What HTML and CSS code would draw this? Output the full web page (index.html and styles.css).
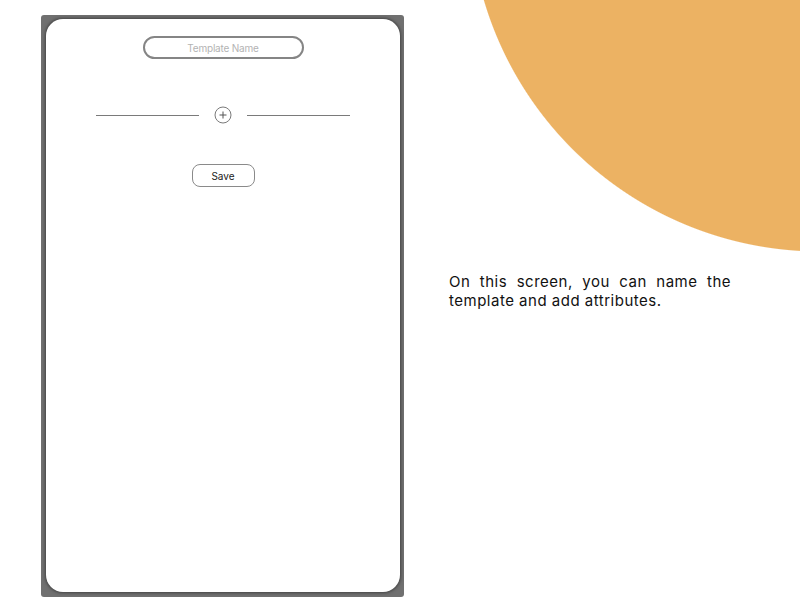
FILE: index.html
```html
<!DOCTYPE html>
<html>
<head>
<meta charset="utf-8">
<link rel="stylesheet" href="styles.css">
</head>
<body>
<div class="page">
  <div class="device">
    <div class="card">
      <div class="name-input">Template Name</div>
      <div class="add-row">
        <span class="rule"></span>
        <svg class="plus" width="18" height="18" viewBox="0 0 18 18">
          <circle cx="9" cy="9" r="8" fill="none" stroke="#7a7a7a" stroke-width="1"/>
          <path d="M9 5.5v7M5.5 9h7" stroke="#555" stroke-width="1" fill="none"/>
        </svg>
        <span class="rule"></span>
      </div>
      <div class="save-btn">Save</div>
    </div>
  </div>
  <p class="caption">On this screen, you can name the template and add attributes.</p>
</div>
</body>
</html>
```
FILE: styles.css
```css
html, body {
  margin: 0;
  padding: 0;
  background: #ffffff;
}
body {
  font-family: Inter, "Noto Sans", sans-serif;
}
.page {
  width: 800px;
  height: 600px;
  box-sizing: border-box;
  display: flex;
  align-items: flex-start;
  padding: 15px 0 0 41px;
  background: radial-gradient(circle 351px at 820px -99px, #ecb263 99.7%, rgba(236, 178, 99, 0) 100%);
}
.device {
  width: 363px;
  height: 582px;
  box-sizing: border-box;
  padding: 4px 4px 5px 5px;
  background: #707070;
  border-radius: 3px;
  display: flex;
}
.card {
  flex: 1;
  background: #ffffff;
  border-radius: 17px;
  box-shadow: 0 0 3px 1px #444444;
  display: flex;
  flex-direction: column;
  align-items: center;
  padding-top: 17px;
}
.name-input {
  width: 161px;
  height: 23px;
  box-sizing: border-box;
  border: 2px solid #858585;
  border-radius: 12px;
  display: flex;
  align-items: center;
  justify-content: center;
  font-size: 10px;
  color: #b3b3b3;
  letter-spacing: -0.2px;
}
.add-row {
  margin-top: 47px;
  display: flex;
  align-items: center;
  gap: 15px;
}
.rule {
  width: 103px;
  height: 1px;
  background: #7a7a7a;
}
.plus {
  display: block;
}
.save-btn {
  margin-top: 40px;
  width: 63px;
  height: 23px;
  box-sizing: border-box;
  border: 1px solid #8a8a8a;
  border-radius: 8px;
  display: flex;
  align-items: center;
  justify-content: center;
  font-size: 10px;
  color: #222222;
}
.caption {
  margin: 257px 0 0 45px;
  width: 282px;
  font-size: 15px;
  line-height: 19px;
  letter-spacing: 0.5px;
  text-align: justify;
  color: #111111;
}
```
